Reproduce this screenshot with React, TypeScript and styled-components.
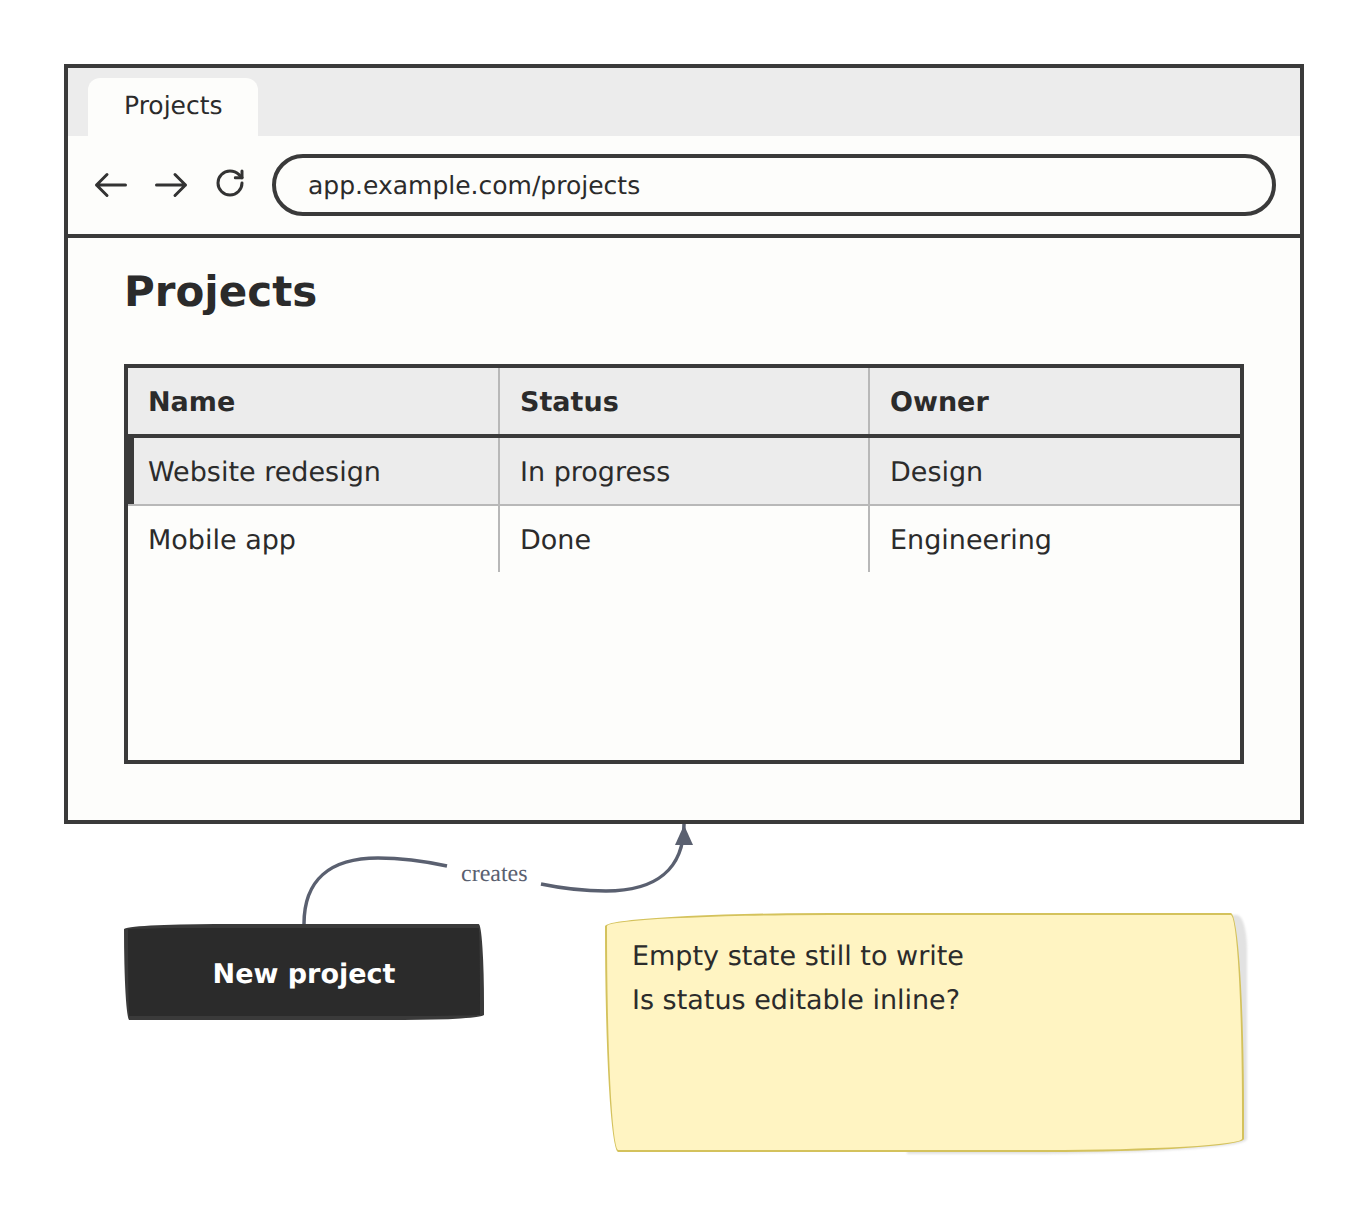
import React from "react";
import styled, { createGlobalStyle } from "styled-components";

const Global = createGlobalStyle`
  html, body { margin: 0; padding: 0; background: #ffffff; }
  * { box-sizing: border-box; }
  body { text-rendering: geometricPrecision; }
`;

const Page = styled.div`
  position: relative;
  isolation: isolate;
  width: 1368px;
  height: 1216px;
  padding: 64px 64px 0;
  font-family: "DejaVu Sans", sans-serif;
  color: #2b2b2b;
  background: #ffffff;
`;

const Browser = styled.div`
  width: 1240px;
  height: 760px;
  border: 4px solid #3a3a3a;
  background: #fdfdfb;
  display: flex;
  flex-direction: column;
`;

const TabBar = styled.div`
  height: 68px;
  padding: 10px 20px 0;
  background: #ececec;
  display: flex;
  align-items: stretch;
`;

const Tab = styled.div`
  width: 170px;
  padding-left: 36px;
  background: #fdfdfb;
  border-radius: 12px 12px 0 0;
  font-size: 25px;
  line-height: 56px;
`;

const Toolbar = styled.div`
  height: 102px;
  padding: 0 24px;
  border-bottom: 4px solid #3a3a3a;
  display: flex;
  align-items: center;
  gap: 24px;
`;

const NavIcon = styled.svg`
  width: 36px;
  height: 36px;
  flex: none;
  fill: none;
  stroke: #333333;
  stroke-width: 3;
  stroke-linecap: round;
  stroke-linejoin: round;
`;

const Address = styled.div`
  flex: 1;
  height: 62px;
  padding-left: 32px;
  border: 4px solid #3a3a3a;
  border-radius: 31px;
  font-size: 25px;
  line-height: 56px;
`;

const Content = styled.div`
  flex: 1;
  padding: 24px 56px 56px;
  display: flex;
  flex-direction: column;
`;

const Title = styled.h1`
  margin: 0 0 42px;
  font-size: 42px;
  line-height: 60px;
  font-weight: 700;
`;

const Table = styled.div`
  flex: 1;
  border: 4px solid #3a3a3a;
`;

const Row = styled.div<{ $head?: boolean; $selected?: boolean; $last?: boolean }>`
  display: grid;
  grid-template-columns: 372px 370px 1fr;
  grid-template-rows: 66px;
  height: ${(p) => (p.$head ? 70 : p.$last ? 66 : 68)}px;
  background: ${(p) => (p.$head || p.$selected ? "#ececec" : "transparent")};
  border-bottom: ${(p) =>
    p.$head ? "4px solid #3a3a3a" : p.$last ? "none" : "2px solid #b8b8b8"};
  box-shadow: ${(p) => (p.$selected ? "inset 6px 0 0 #3a3a3a" : "none")};
  font-weight: ${(p) => (p.$head ? 700 : 400)};
`;

const Cell = styled.div`
  padding: 2px 0 0 20px;
  display: flex;
  align-items: center;
  font-size: 27px;
  &:not(:last-child) {
    border-right: 2px solid #b8b8b8;
  }
`;

const Notes = styled.div`
  padding: 89px 0 0 60px;
  display: flex;
  align-items: flex-start;
  gap: 121px;
`;

const ActionButton = styled.div`
  width: 360px;
  height: 96px;
  margin-top: 11px;
  padding-top: 4px;
  display: flex;
  align-items: center;
  justify-content: center;
  background: #2b2b2b;
  border: 4px solid #3a3a3a;
  border-radius: 255px 15px 225px 15px / 15px 225px 15px 255px;
  font-size: 27px;
  font-weight: 700;
  color: #ffffff;
`;

const Sticky = styled.div`
  position: relative;
  width: 639px;
  height: 239px;
  padding: 20px 0 0 25px;
  background: #fff4c2;
  border: 2px solid #d4c25c;
  border-radius: 255px 15px 225px 15px / 15px 225px 15px 255px;
  font-size: 27px;
  line-height: 44px;
  &::before {
    content: "";
    position: absolute;
    z-index: -1;
    top: 0;
    right: -5px;
    bottom: -4px;
    left: 300px;
    background: #e2e2e2;
    border-radius: 0 10px 225px 0 / 0 34px 15px 0;
    filter: blur(1px);
  }
`;

const Connector = styled.svg`
  position: absolute;
  left: 0;
  top: 0;
  pointer-events: none;
`;

const EdgeLabel = styled.div`
  position: absolute;
  left: 461px;
  top: 860px;
  font-family: "Liberation Serif", serif;
  font-size: 24px;
  line-height: 28px;
  color: #5a6070;
`;

const rows = [
  { cells: ["Website redesign", "In progress", "Design"], selected: true },
  { cells: ["Mobile app", "Done", "Engineering"], last: true },
];

export default function App() {
  return (
    <Page>
      <Global />
      <Browser>
        <TabBar>
          <Tab>Projects</Tab>
        </TabBar>
        <Toolbar>
          <NavIcon viewBox="0 0 36 36">
            <path d="M33.5 18H4.5M15 7.5 4.5 18 15 28.5" />
          </NavIcon>
          <NavIcon viewBox="0 0 36 36">
            <path d="M4.5 18h29M23 7.5 33.5 18 23 28.5" />
          </NavIcon>
          <NavIcon viewBox="0 0 36 36">
            <g transform="translate(2 0) scale(1.333)" strokeWidth="2.25">
              <path d="M21 12a9 9 0 1 1-9-9c2.52 0 4.93 1 6.74 2.74L21 8" />
              <path d="M21 3v5h-5" />
            </g>
          </NavIcon>
          <Address>app.example.com/projects</Address>
        </Toolbar>
        <Content>
          <Title>Projects</Title>
          <Table>
            <Row $head>
              <Cell>Name</Cell>
              <Cell>Status</Cell>
              <Cell>Owner</Cell>
            </Row>
            {rows.map((r) => (
              <Row key={r.cells[0]} $selected={r.selected} $last={r.last}>
                {r.cells.map((c) => (
                  <Cell key={c}>{c}</Cell>
                ))}
              </Row>
            ))}
          </Table>
        </Content>
      </Browser>
      <Notes>
        <ActionButton>New project</ActionButton>
        <Sticky>
          Empty state still to write
          <br />
          Is status editable inline?
        </Sticky>
      </Notes>
      <Connector width="1368" height="1216" viewBox="0 0 1368 1216" fill="none">
        <path
          d="M304 924C304 880 330 858 378 858C402 858 424 861 447 866"
          stroke="#5a6070"
          strokeWidth="3.5"
        />
        <path
          d="M541 884C565 889 585 891 606 891C655 891 684 870 684 824"
          stroke="#5a6070"
          strokeWidth="3.5"
        />
        <path d="M684 825 693 845H675Z" fill="#5a6070" />
      </Connector>
      <EdgeLabel>creates</EdgeLabel>
    </Page>
  );
}
